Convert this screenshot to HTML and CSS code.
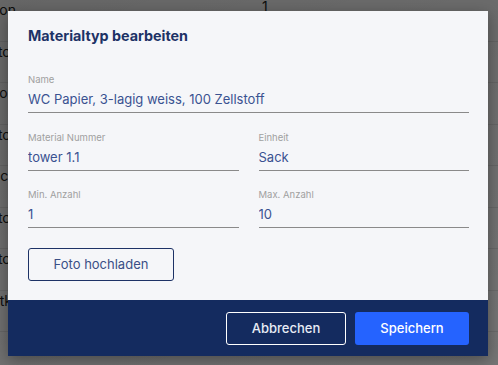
FILE: index.html
```html
<!DOCTYPE html>
<html lang="de">
<head>
    <meta charset="UTF-8">
    <meta name="viewport" content="width=device-width, initial-scale=1.0">
    <title>Materialtyp bearbeiten</title>
    <link rel="stylesheet" href="styles.css">
</head>
<body>
    <!-- table behind the dialog, dimmed by the backdrop -->
    <div class="page">
        <div class="row"><div class="cell-name"><span>Person</span></div><div class="cell-count">1</div></div>
        <div class="row"><div class="cell-name"><span>Monitor</span></div><div class="cell-count"></div></div>
        <div class="row"><div class="cell-name"><span>Karton</span></div><div class="cell-count"></div></div>
        <div class="row"><div class="cell-name"><span>Monitor</span></div><div class="cell-count"></div></div>
        <div class="row"><div class="cell-name"><span>Sack</span></div><div class="cell-count"></div></div>
        <div class="row"><div class="cell-name"><span>Monitor</span></div><div class="cell-count"></div></div>
        <div class="row"><div class="cell-name"><span>Monitor</span></div><div class="cell-count"></div></div>
        <div class="row"><div class="cell-name"><span>Stk.</span></div><div class="cell-count"></div></div>
        <div class="row"><div class="cell-name"><span></span></div><div class="cell-count"></div></div>
    </div>

    <div class="backdrop">
        <div class="modal">
            <div class="modal-body">
                <h2 class="modal-title">Materialtyp bearbeiten</h2>

                <div class="field">
                    <label for="name">Name</label>
                    <input type="text" id="name" value="WC Papier, 3-lagig weiss, 100 Zellstoff">
                </div>

                <div class="field-grid">
                    <div class="field">
                        <label for="nummer">Material Nummer</label>
                        <input type="text" id="nummer" value="tower 1.1">
                    </div>
                    <div class="field">
                        <label for="einheit">Einheit</label>
                        <input type="text" id="einheit" value="Sack">
                    </div>
                    <div class="field">
                        <label for="min">Min. Anzahl</label>
                        <input type="text" id="min" value="1">
                    </div>
                    <div class="field">
                        <label for="max">Max. Anzahl</label>
                        <input type="text" id="max" value="10">
                    </div>
                </div>

                <button class="upload-button">Foto hochladen</button>
            </div>

            <div class="modal-footer">
                <button class="cancel-button">Abbrechen</button>
                <button class="save-button">Speichern</button>
            </div>
        </div>
    </div>
</body>
</html>
```

FILE: styles.css
```css
body {
    font-family: Inter, "Noto Sans", sans-serif;
    margin: 0;
    padding: 0;
    width: 498px;
    height: 365px;
    overflow: hidden;
    position: relative;
    background-color: #ffffff;
}

/* page content behind the dialog */
.page {
    display: flex;
    flex-direction: column;
}
.row {
    display: flex;
    height: 41.5px;
    border-bottom: 1px solid #e8e8e8;
    box-sizing: border-box;
    font-size: 14px;
    color: #222;
}
.cell-name {
    width: 16px;
    display: flex;
    justify-content: flex-end;
    align-items: center;
    white-space: nowrap;
    margin-top: -21px;
}
.cell-count {
    padding-left: 246px;
    line-height: 14px;
}

/* dialog */
.backdrop {
    position: absolute;
    inset: 0;
    background: linear-gradient(160deg, rgba(0, 0, 0, 0.6), rgba(0, 0, 0, 0.54));
    display: flex;
    align-items: flex-start;
    padding: 11px 0 0 8px;
    box-sizing: border-box;
}
.modal {
    width: 480px;
    height: 345px;
    display: flex;
    flex-direction: column;
    background-color: #f5f6f9;
    box-shadow: 0 4px 14px rgba(0, 0, 0, 0.35);
}
.modal-body {
    flex: 1;
    padding: 15px 19px 0 20px;
}
.modal-title {
    margin: 0 0 28px 0;
    font-size: 14.3px;
    line-height: 20px;
    font-weight: 700;
    color: #1d3266;
}
.field {
    display: flex;
    flex-direction: column;
    margin-bottom: 18.5px;
    min-width: 0;
}
.field label {
    font-size: 9.5px;
    line-height: 12px;
    color: #a0a0a0;
    margin-bottom: 3px;
}
.field input {
    font-family: inherit;
    font-size: 13px;
    line-height: 18px;
    height: 24px;
    width: 100%;
    box-sizing: border-box;
    color: #3a5291;
    background: transparent;
    border: none;
    border-bottom: 1px solid #8a8a8a;
    padding: 1px 0 4px 0;
    margin: 0;
    outline: none;
}
.field-grid {
    display: grid;
    grid-template-columns: minmax(0, 1fr) minmax(0, 1fr);
    column-gap: 20px;
}
.upload-button {
    font-family: inherit;
    width: 146px;
    height: 33px;
    margin-top: 1px;
    border: 1px solid #1d3266;
    border-radius: 3px;
    background: transparent;
    color: #3a4f86;
    font-size: 13px;
    cursor: pointer;
}
.modal-footer {
    height: 56px;
    background-color: #142b5f;
    display: flex;
    justify-content: flex-end;
    align-items: center;
    gap: 9px;
    padding: 0 19px;
}
.cancel-button, .save-button {
    font-family: inherit;
    height: 33px;
    border-radius: 3px;
    font-size: 13px;
    font-weight: 500;
    cursor: pointer;
}
.cancel-button {
    width: 120px;
    background: transparent;
    border: 1px solid #ffffff;
    color: #e8ecf5;
}
.save-button {
    width: 114px;
    background-color: #2563ff;
    border: none;
    color: #ffffff;
}
```
